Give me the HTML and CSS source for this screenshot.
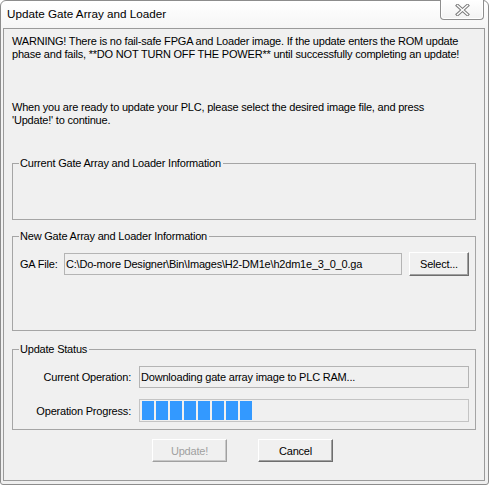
FILE: index.html
```html
<!DOCTYPE html>
<html>
<head>
<meta charset="utf-8">
<title>Update Gate Array and Loader</title>
<link rel="stylesheet" href="styles.css">
</head>
<body>
<div class="window">
  <div class="titlebar">
    <span class="title">Update Gate Array and Loader</span>
    <button class="close" aria-label="Close">
      <svg width="15" height="12" viewBox="0 0 15 12">
        <path d="M2.5 1.5 L12.5 10.5 M12.5 1.5 L2.5 10.5" stroke="#7d7d7d" stroke-width="3.4" stroke-linecap="square" fill="none"/>
        <path d="M2.5 1.5 L12.5 10.5 M12.5 1.5 L2.5 10.5" stroke="#ffffff" stroke-width="1.4" stroke-linecap="square" fill="none"/>
      </svg>
    </button>
  </div>
  <div class="client">
    <p class="msg">WARNING! There is no fail-safe FPGA and Loader image. If the update enters the ROM update phase and fails, **DO NOT TURN OFF THE POWER** until successfully completing an update!</p>
    <p class="msg msg2">When you are ready to update your PLC, please select the desired image file, and press 'Update!' to continue.</p>

    <fieldset class="group group-current">
      <legend>Current Gate Array and Loader Information</legend>
    </fieldset>

    <fieldset class="group group-new">
      <legend>New Gate Array and Loader Information</legend>
      <div class="file-row">
        <span class="file-label">GA File:</span>
        <div class="field file-field">C:\Do-more Designer\Bin\Images\H2-DM1e\h2dm1e_3_0_0.ga</div>
        <button class="btn select-btn">Select...</button>
      </div>
    </fieldset>

    <fieldset class="group group-status">
      <legend>Update Status</legend>
      <div class="status-grid">
        <span class="status-label">Current Operation:</span>
        <div class="field op-field">Downloading gate array image to PLC RAM...</div>
        <span class="status-label">Operation Progress:</span>
        <div class="progress">
          <span class="block"></span><span class="block"></span><span class="block"></span><span class="block"></span><span class="block"></span><span class="block"></span><span class="block"></span><span class="block"></span>
        </div>
      </div>
    </fieldset>

    <div class="buttons">
      <button class="btn dlg-btn" disabled>Update!</button>
      <button class="btn dlg-btn">Cancel</button>
    </div>
  </div>
</div>
</body>
</html>
```

FILE: styles.css
```css
html, body {
  margin: 0;
  padding: 0;
  background: #ffffff;
}

body {
  width: 491px;
  height: 486px;
  overflow: hidden;
  font-family: "Liberation Sans", Arial, sans-serif;
  font-size: 11px;
  letter-spacing: -0.2px;
  color: #000;
}

.window {
  box-sizing: border-box;
  width: 489px;
  height: 485px;
  border: 1px solid #8c8c8c;
  border-radius: 6px 6px 3px 3px;
  background: linear-gradient(#ffffff, #f4f4f4 30px, #efefef);
  display: flex;
  flex-direction: column;
  padding: 0 3px 3px 2px;
}

.titlebar {
  height: 27px;
  flex: none;
  display: flex;
  align-items: flex-start;
  justify-content: space-between;
}

.title {
  font-size: 11.7px;
  letter-spacing: 0;
  margin: 6px 0 0 4px;
  color: #000;
}

.close {
  box-sizing: border-box;
  width: 44px;
  height: 20px;
  margin: -1px 1px 0 0;
  padding: 0;
  border: 1px solid #8e8e8e;
  border-top: none;
  border-radius: 0 0 4px 4px;
  background: linear-gradient(#ffffff, #f3f3f3);
  display: flex;
  align-items: center;
  justify-content: center;
  box-shadow: inset 0 0 0 1px #ffffff;
}

.client {
  flex: 1;
  box-sizing: border-box;
  border: 1px solid #9a9a9a;
  background: #f0f0f0;
  padding: 6px 8px 0 8px;
  display: flex;
  flex-direction: column;
}

.msg {
  margin: 0;
  line-height: 13px;
  padding-right: 9px;
}

.msg2 {
  margin-top: 40px;
}

.group {
  margin: 30px 0 0 0;
  padding: 0 0 0 6px;
  border: 1px solid #a5a5a5;
  border-radius: 0;
}

.group legend {
  padding: 0 2px 0 1px;
  line-height: 13px;
}

.group-current {
  height: 63px;
  box-sizing: border-box;
}

.group-new {
  margin-top: 10px;
  height: 101px;
  box-sizing: border-box;
}

.group-status {
  margin-top: 12px;
  height: 87px;
  box-sizing: border-box;
}

.file-row {
  display: flex;
  align-items: center;
  margin-top: 9px;
}

.file-label {
  width: 44px;
  margin-left: 1px;
}

.field {
  box-sizing: border-box;
  border: 1px solid #b4b4b4;
  background: #f0f0f0;
  height: 22px;
  line-height: 20px;
  padding-left: 1px;
  white-space: nowrap;
  overflow: hidden;
}

.file-field {
  width: 338px;
}

.btn {
  font-family: inherit;
  font-size: 11px;
  letter-spacing: -0.2px;
  color: #000;
  box-sizing: border-box;
  background: #f0f0f0;
  border: 1px solid;
  border-color: #ffffff #6e6e6e #6e6e6e #ffffff;
  box-shadow: inset -1px -1px 0 #a0a0a0;
  padding: 0;
}

.select-btn {
  width: 60px;
  height: 24px;
  margin-left: 7px;
}

.status-grid {
  display: grid;
  grid-template-columns: 112px 330px;
  column-gap: 8px;
  row-gap: 11px;
  align-items: center;
  margin-top: 10px;
}

.status-label {
  text-align: right;
}

.op-field {
  height: 22px;
}

.progress {
  box-sizing: border-box;
  height: 23px;
  border: 1px solid #c4c4c4;
  background: #f0f0f0;
  display: flex;
  gap: 2px;
  padding: 1px 0 1px 2px;
}

.block {
  width: 12px;
  background: #3399ff;
}

.buttons {
  display: flex;
  justify-content: center;
  gap: 31px;
  margin-top: 9px;
  padding-right: 3px;
}

.dlg-btn {
  width: 75px;
  height: 23px;
}

.dlg-btn:disabled {
  color: #a0a0a0;
  border-color: #ffffff #a0a0a0 #a0a0a0 #ffffff;
  box-shadow: inset -1px -1px 0 #c8c8c8;
}
```
